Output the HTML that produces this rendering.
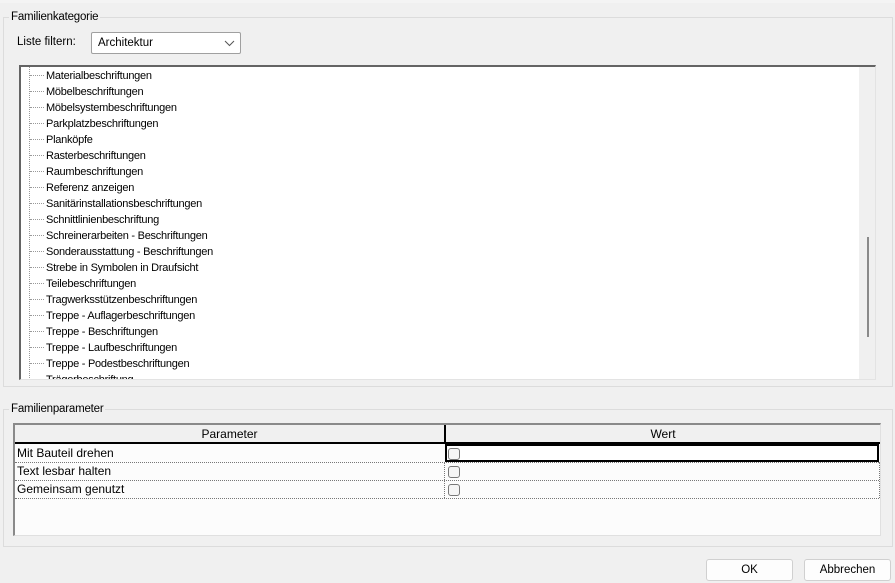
<!DOCTYPE html>
<html><head><meta charset="utf-8"><style>
*{margin:0;padding:0;box-sizing:border-box}
body{width:895px;height:583px;background:#f0f0f0;font-family:"Liberation Sans",sans-serif;font-size:12px;color:#000;position:relative;overflow:hidden}
.abs{position:absolute}
.grp{position:absolute;border:1px solid #dcdcdc}
.lbl{position:absolute;background:#f0f0f0;padding:0 2px;font-size:11.5px;letter-spacing:-0.2px;line-height:14px}
.tree{position:absolute;left:19px;top:65px;width:857px;height:315px;background:#fff;border-top:2px solid #646464;border-left:2px solid #646464;border-right:1px solid #e3e3e3;border-bottom:1px solid #e3e3e3;overflow:hidden}
.row{position:absolute;left:25px;height:16px;line-height:16px;font-size:11px;letter-spacing:-0.25px;white-space:nowrap}
.hl{position:absolute;left:9px;width:14px;border-top:1px dotted #999}
.vl{position:absolute;left:8px;top:0;height:315px;border-left:1px dotted #999}
.tbl{position:absolute;left:13px;top:423px;width:868px;height:113px;background:#fcfcfc;border:2px solid #8a8a8a;border-right:1px solid #e0e0e0;border-bottom:1px solid #e0e0e0}
.btn{position:absolute;top:559px;height:22px;background:#fdfdfd;border:1px solid #d0d0d0;border-radius:3px;text-align:center;line-height:21px;font-size:11.5px}
.cb{position:absolute;left:448px;width:12px;height:12px;border:1px solid #777;border-radius:3px;background:#f5f5f5}
.pr{position:absolute;left:17px;font-size:12px;line-height:18px}
</style></head><body>
<div class="abs" style="left:0;top:0;width:895px;height:3px;background:#f4f4f4"></div>
<div class="grp" style="left:3px;top:17px;width:890px;height:370px"></div>
<div class="lbl" style="left:9px;top:10px">Familienkategorie</div>
<div class="abs" style="left:17px;top:36px;font-size:11.5px">Liste filtern:</div>
<div class="abs" style="left:91px;top:32px;width:150px;height:22px;background:#fff;border:1px solid #a0a0a0;border-radius:2px;font-size:11.5px;line-height:20px;padding-left:6px">Architektur
<svg class="abs" style="right:5px;top:7px" width="11" height="7" viewBox="0 0 11 7"><path d="M1 1l4.5 4.5L10 1" fill="none" stroke="#555" stroke-width="1"/></svg></div>
<div class="tree">
<div class="vl"></div>
<div class="abs" style="right:0;top:0;width:16px;height:315px;background:#f0f0f0"></div>
<div class="abs" style="left:846px;top:170px;width:2px;height:100px;background:#8a8a8a"></div>
<div class="row" style="top:1px">Materialbeschriftungen</div><div class="hl" style="top:8px"></div>
<div class="row" style="top:17px">Möbelbeschriftungen</div><div class="hl" style="top:24px"></div>
<div class="row" style="top:33px">Möbelsystembeschriftungen</div><div class="hl" style="top:40px"></div>
<div class="row" style="top:49px">Parkplatzbeschriftungen</div><div class="hl" style="top:56px"></div>
<div class="row" style="top:65px">Planköpfe</div><div class="hl" style="top:72px"></div>
<div class="row" style="top:81px">Rasterbeschriftungen</div><div class="hl" style="top:88px"></div>
<div class="row" style="top:97px">Raumbeschriftungen</div><div class="hl" style="top:104px"></div>
<div class="row" style="top:113px">Referenz anzeigen</div><div class="hl" style="top:120px"></div>
<div class="row" style="top:129px">Sanitärinstallationsbeschriftungen</div><div class="hl" style="top:136px"></div>
<div class="row" style="top:145px">Schnittlinienbeschriftung</div><div class="hl" style="top:152px"></div>
<div class="row" style="top:161px">Schreinerarbeiten - Beschriftungen</div><div class="hl" style="top:168px"></div>
<div class="row" style="top:177px">Sonderausstattung - Beschriftungen</div><div class="hl" style="top:184px"></div>
<div class="row" style="top:193px">Strebe in Symbolen in Draufsicht</div><div class="hl" style="top:200px"></div>
<div class="row" style="top:209px">Teilebeschriftungen</div><div class="hl" style="top:216px"></div>
<div class="row" style="top:225px">Tragwerksstützenbeschriftungen</div><div class="hl" style="top:232px"></div>
<div class="row" style="top:241px">Treppe - Auflagerbeschriftungen</div><div class="hl" style="top:248px"></div>
<div class="row" style="top:257px">Treppe - Beschriftungen</div><div class="hl" style="top:264px"></div>
<div class="row" style="top:273px">Treppe - Laufbeschriftungen</div><div class="hl" style="top:280px"></div>
<div class="row" style="top:289px">Treppe - Podestbeschriftungen</div><div class="hl" style="top:296px"></div>
<div class="row" style="top:305px">Trägerbeschriftung</div>
</div>
<div class="grp" style="left:3px;top:409px;width:890px;height:138px"></div>
<div class="lbl" style="left:9px;top:402px">Familienparameter</div>
<div class="tbl"></div>
<div class="abs" style="left:15px;top:425px;width:865px;height:19px;background:#f0f0f0;border-bottom:2px solid #000"></div>
<div class="abs" style="left:444px;top:425px;width:2px;height:19px;background:#000"></div>
<div class="abs" style="left:15px;top:427px;width:429px;text-align:center;font-size:12px">Parameter</div>
<div class="abs" style="left:446px;top:427px;width:434px;text-align:center;font-size:12px">Wert</div>
<div class="abs" style="left:445px;top:444px;width:434px;height:18px;border:2px solid #000;background:#fff"></div>
<div class="abs" style="left:15px;top:462px;width:864px;border-top:1px dotted #777"></div>
<div class="abs" style="left:15px;top:480px;width:864px;border-top:1px dotted #777"></div>
<div class="abs" style="left:15px;top:498px;width:864px;border-top:1px dotted #777"></div>
<div class="abs" style="left:444px;top:462px;height:36px;border-left:1px dotted #777"></div>
<div class="abs" style="left:879px;top:462px;height:36px;border-left:1px dotted #777"></div>
<div class="pr" style="top:444px">Mit Bauteil drehen</div>
<div class="pr" style="top:462px">Text lesbar halten</div>
<div class="pr" style="top:480px">Gemeinsam genutzt</div>
<div class="cb" style="top:448px"></div>
<div class="cb" style="top:466px"></div>
<div class="cb" style="top:484px"></div>
<div class="btn" style="left:706px;width:87px">OK</div>
<div class="btn" style="left:804px;width:87px">Abbrechen</div>
</body></html>
